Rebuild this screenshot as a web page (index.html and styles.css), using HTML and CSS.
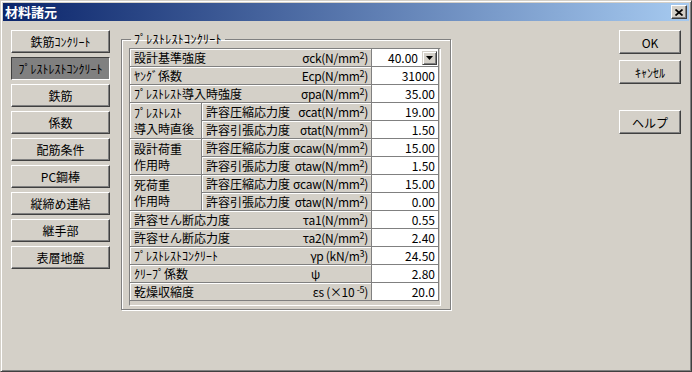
FILE: index.html
```html
<!DOCTYPE html>
<html lang="ja">
<head>
  <meta charset="UTF-8" />
  <title>材料諸元</title>
  <link rel="stylesheet" href="styles.css">
</head>
<body>
  <div class="window">
    <div class="titlebar">
      <span class="title">材料諸元</span>
      <button class="close-btn">
        <svg width="8" height="7" viewBox="0 0 8 7"><path d="M0.5 0.5L7.5 6.5M7.5 0.5L0.5 6.5" stroke="#000" stroke-width="1.7"/></svg>
      </button>
    </div>

    <div class="content">
      <div class="side-menu">
        <button class="btn">鉄筋ｺﾝｸﾘｰﾄ</button>
        <button class="btn active">ﾌﾟﾚｽﾄﾚｽﾄｺﾝｸﾘｰﾄ</button>
        <button class="btn">鉄筋</button>
        <button class="btn">係数</button>
        <button class="btn">配筋条件</button>
        <button class="btn">PC鋼棒</button>
        <button class="btn">縦締め連結</button>
        <button class="btn">継手部</button>
        <button class="btn">表層地盤</button>
      </div>

      <fieldset class="group">
        <legend>ﾌﾟﾚｽﾄﾚｽﾄｺﾝｸﾘｰﾄ</legend>
        <div class="grid-panel">
          <div class="grid">
            <div class="cell span2"><span>設計基準強度</span><span class="sym">σck(N/mm<sup>2</sup>)</span></div>
            <div class="cell value combo"><span>40.00</span><span class="drop"><svg width="7" height="4" viewBox="0 0 7 4"><path d="M0 0h7L3.5 4z" fill="#000"/></svg></span></div>

            <div class="cell span2"><span>ﾔﾝｸﾞ係数</span><span class="sym">Ecp(N/mm<sup>2</sup>)</span></div>
            <div class="cell value">31000</div>

            <div class="cell span2"><span>ﾌﾟﾚｽﾄﾚｽﾄ導入時強度</span><span class="sym">σpa(N/mm<sup>2</sup>)</span></div>
            <div class="cell value">35.00</div>

            <div class="cell group-head"><span>ﾌﾟﾚｽﾄﾚｽﾄ</span><span>導入時直後</span></div>
            <div class="cell"><span>許容圧縮応力度</span><span class="sym">σcat(N/mm<sup>2</sup>)</span></div>
            <div class="cell value">19.00</div>
            <div class="cell"><span>許容引張応力度</span><span class="sym">σtat(N/mm<sup>2</sup>)</span></div>
            <div class="cell value">1.50</div>

            <div class="cell group-head"><span>設計荷重</span><span>作用時</span></div>
            <div class="cell"><span>許容圧縮応力度</span><span class="sym">σcaw(N/mm<sup>2</sup>)</span></div>
            <div class="cell value">15.00</div>
            <div class="cell"><span>許容引張応力度</span><span class="sym">σtaw(N/mm<sup>2</sup>)</span></div>
            <div class="cell value">1.50</div>

            <div class="cell group-head"><span>死荷重</span><span>作用時</span></div>
            <div class="cell"><span>許容圧縮応力度</span><span class="sym">σcaw(N/mm<sup>2</sup>)</span></div>
            <div class="cell value">15.00</div>
            <div class="cell"><span>許容引張応力度</span><span class="sym">σtaw(N/mm<sup>2</sup>)</span></div>
            <div class="cell value">0.00</div>

            <div class="cell span2"><span>許容せん断応力度</span><span class="sym">τa1(N/mm<sup>2</sup>)</span></div>
            <div class="cell value">0.55</div>

            <div class="cell span2"><span>許容せん断応力度</span><span class="sym">τa2(N/mm<sup>2</sup>)</span></div>
            <div class="cell value">2.40</div>

            <div class="cell span2"><span>ﾌﾟﾚｽﾄﾚｽﾄｺﾝｸﾘｰﾄ</span><span class="sym">γp (kN/m<sup>3</sup>)</span></div>
            <div class="cell value">24.50</div>

            <div class="cell span2"><span>ｸﾘｰﾌﾟ係数</span><span class="sym psi">ψ</span></div>
            <div class="cell value">2.80</div>

            <div class="cell span2"><span>乾燥収縮度</span><span class="sym">εs (×10 <sup>-5</sup>)</span></div>
            <div class="cell value">20.0</div>
          </div>
        </div>
      </fieldset>

      <div class="actions">
        <button class="btn">OK</button>
        <button class="btn">ｷｬﾝｾﾙ</button>
        <button class="btn help">ヘルプ</button>
      </div>
    </div>
  </div>
</body>
</html>
```

FILE: styles.css
```css
html, body {
  margin: 0;
  padding: 0;
}
body {
  width: 692px;
  height: 372px;
  overflow: hidden;
  background: #d4d0c8;
  font-family: "Noto Sans CJK JP", sans-serif;
  font-size: 12px;
  color: #000;
}
.window {
  box-sizing: border-box;
  width: 692px;
  height: 372px;
  padding: 2px;
  background: #d4d0c8;
  border: 1px solid;
  border-color: #d4d0c8 #404040 #404040 #d4d0c8;
  box-shadow: inset 1px 1px 0 #fff, inset -1px -1px 0 #808080;
}
.titlebar {
  height: 18px;
  display: flex;
  align-items: center;
  justify-content: space-between;
  padding: 0 2px;
  background: linear-gradient(to right, #0a246a, #a6caf0);
}
.title {
  color: #fff;
  font-weight: bold;
  font-size: 13px;
  line-height: 18px;
}
.close-btn {
  box-sizing: border-box;
  width: 16px;
  height: 14px;
  padding: 0;
  display: flex;
  align-items: center;
  justify-content: center;
  background: #d4d0c8;
  border: 1px solid;
  border-color: #fff #404040 #404040 #fff;
  box-shadow: inset -1px -1px 0 #808080;
}
.content {
  display: flex;
  align-items: flex-start;
  margin-top: 9px;
  padding-left: 8px;
}
.btn {
  box-sizing: border-box;
  height: 23px;
  padding: 0;
  font-family: inherit;
  font-size: 12px;
  color: #000;
  background: #d4d0c8;
  border: 1px solid;
  border-color: #fff #404040 #404040 #fff;
  box-shadow: inset -1px -1px 0 #808080;
  white-space: nowrap;
}
.side-menu {
  width: 99px;
  display: flex;
  flex-direction: column;
  gap: 4px;
}
.side-menu .active {
  background: #808080;
  border-color: #404040 #fff #fff #404040;
  box-shadow: inset 1px 1px 0 #808080;
}
.group {
  margin: 2px 0 0 11px;
  padding: 2px 9px 3px 7px;
  border: 1px solid #808080;
  box-shadow: 1px 1px 0 #fff, inset 1px 1px 0 #fff;
  min-width: 0;
}
.group legend {
  margin-left: 2px;
  padding: 0 3px;
  line-height: 14px;
  letter-spacing: 0.3px;
}
.grid-panel {
  box-sizing: border-box;
  width: 312px;
  height: 258px;
  border: 1px solid;
  border-color: #808080 #fff #fff #808080;
}
.grid {
  display: grid;
  grid-template-columns: 71px 169px 66px;
  grid-auto-rows: 17px;
  gap: 1px;
  padding: 0 1px 1px 0;
  width: max-content;
  background: #808080;
}
.cell {
  display: flex;
  align-items: center;
  justify-content: space-between;
  padding: 0 3px 0 4px;
  line-height: 15px;
  white-space: nowrap;
  background: #d4d0c8;
  box-shadow: inset 1px 1px 0 #fff;
}
.span2 {
  grid-column: span 2;
}
.group-head {
  grid-row: span 2;
  flex-direction: column;
  align-items: flex-start;
  justify-content: center;
  line-height: 16px;
}
.value {
  justify-content: flex-end;
  background: #fff;
  box-shadow: none;
}
.combo {
  padding-right: 1px;
}
.drop {
  box-sizing: border-box;
  width: 15px;
  height: 14px;
  margin-left: 4px;
  display: flex;
  align-items: center;
  justify-content: center;
  background: #d4d0c8;
  border: 1px solid;
  border-color: #d4d0c8 #404040 #404040 #d4d0c8;
  box-shadow: inset 1px 1px 0 #fff, inset -1px -1px 0 #808080;
}
.sym {
  margin-left: 3px;
  letter-spacing: -0.3px;
}
.sym sup {
  font-size: 9px;
  line-height: 0;
  vertical-align: 4px;
}
.psi {
  margin-right: 48px;
}
.actions {
  width: 62px;
  margin-left: 168px;
  display: flex;
  flex-direction: column;
  gap: 6px;
}
.actions .btn {
  height: 24px;
}
.actions .help {
  margin-top: 20px;
}
```
